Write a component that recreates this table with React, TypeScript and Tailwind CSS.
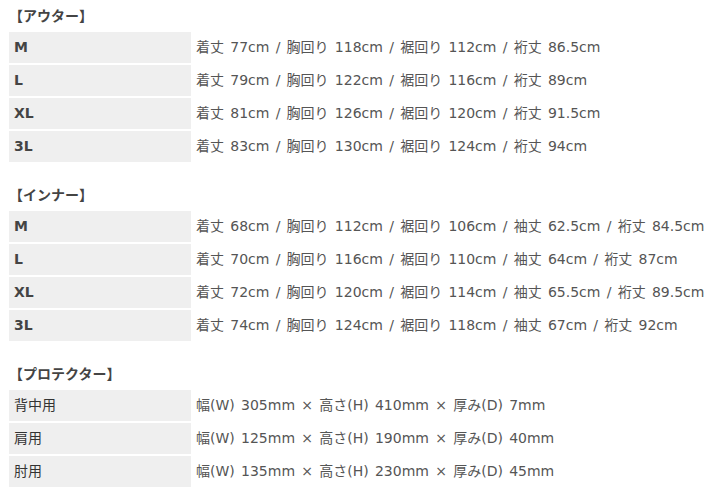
import React from "react";

type Row = { label: string; value: string; jp?: boolean };
type Section = { title: string; rows: Row[] };

const sections: Section[] = [
  {
    title: "【アウター】",
    rows: [
      { label: "M", value: "着丈 77cm / 胸回り 118cm / 裾回り 112cm / 裄丈 86.5cm" },
      { label: "L", value: "着丈 79cm / 胸回り 122cm / 裾回り 116cm / 裄丈 89cm" },
      { label: "XL", value: "着丈 81cm / 胸回り 126cm / 裾回り 120cm / 裄丈 91.5cm" },
      { label: "3L", value: "着丈 83cm / 胸回り 130cm / 裾回り 124cm / 裄丈 94cm" },
    ],
  },
  {
    title: "【インナー】",
    rows: [
      { label: "M", value: "着丈 68cm / 胸回り 112cm / 裾回り 106cm / 袖丈 62.5cm / 裄丈 84.5cm" },
      { label: "L", value: "着丈 70cm / 胸回り 116cm / 裾回り 110cm / 袖丈 64cm / 裄丈 87cm" },
      { label: "XL", value: "着丈 72cm / 胸回り 120cm / 裾回り 114cm / 袖丈 65.5cm / 裄丈 89.5cm" },
      { label: "3L", value: "着丈 74cm / 胸回り 124cm / 裾回り 118cm / 袖丈 67cm / 裄丈 92cm" },
    ],
  },
  {
    title: "【プロテクター】",
    rows: [
      { label: "背中用", value: "幅(W) 305mm × 高さ(H) 410mm × 厚み(D) 7mm", jp: true },
      { label: "肩用", value: "幅(W) 125mm × 高さ(H) 190mm × 厚み(D) 40mm", jp: true },
      { label: "肘用", value: "幅(W) 135mm × 高さ(H) 230mm × 厚み(D) 45mm", jp: true },
    ],
  },
];

export default function App() {
  return (
    <div
      className="w-[717px] h-[496px] bg-white overflow-hidden pl-[7px] text-[14px] text-[#555]"
      style={{ fontFamily: '"DejaVu Sans", "Noto Sans CJK JP", sans-serif' }}
    >
      {sections.map((s, i) => (
        <div key={s.title} className={i === 0 ? "" : "mt-[15px]"}>
          <div className="h-[30px] flex items-center pl-[2px] pt-[2px] font-bold text-[#444] text-[14px]">
            {s.title}
          </div>
          <table className="border-separate border-spacing-[2px]">
            <tbody>
              {s.rows.map((r) => (
                <tr key={r.label}>
                  <td
                    className={
                      "w-[182px] h-[31px] p-0 pl-[5px] bg-[#efefef] align-middle text-[14px] " +
                      (r.jp ? "font-normal text-[#333]" : "font-bold text-[#444]")
                    }
                  >
                    {r.label}
                  </td>
                  <td className="h-[31px] p-0 pl-[3px] align-middle whitespace-nowrap [word-spacing:1.8px]">
                    {r.value}
                  </td>
                </tr>
              ))}
            </tbody>
          </table>
        </div>
      ))}
    </div>
  );
}
